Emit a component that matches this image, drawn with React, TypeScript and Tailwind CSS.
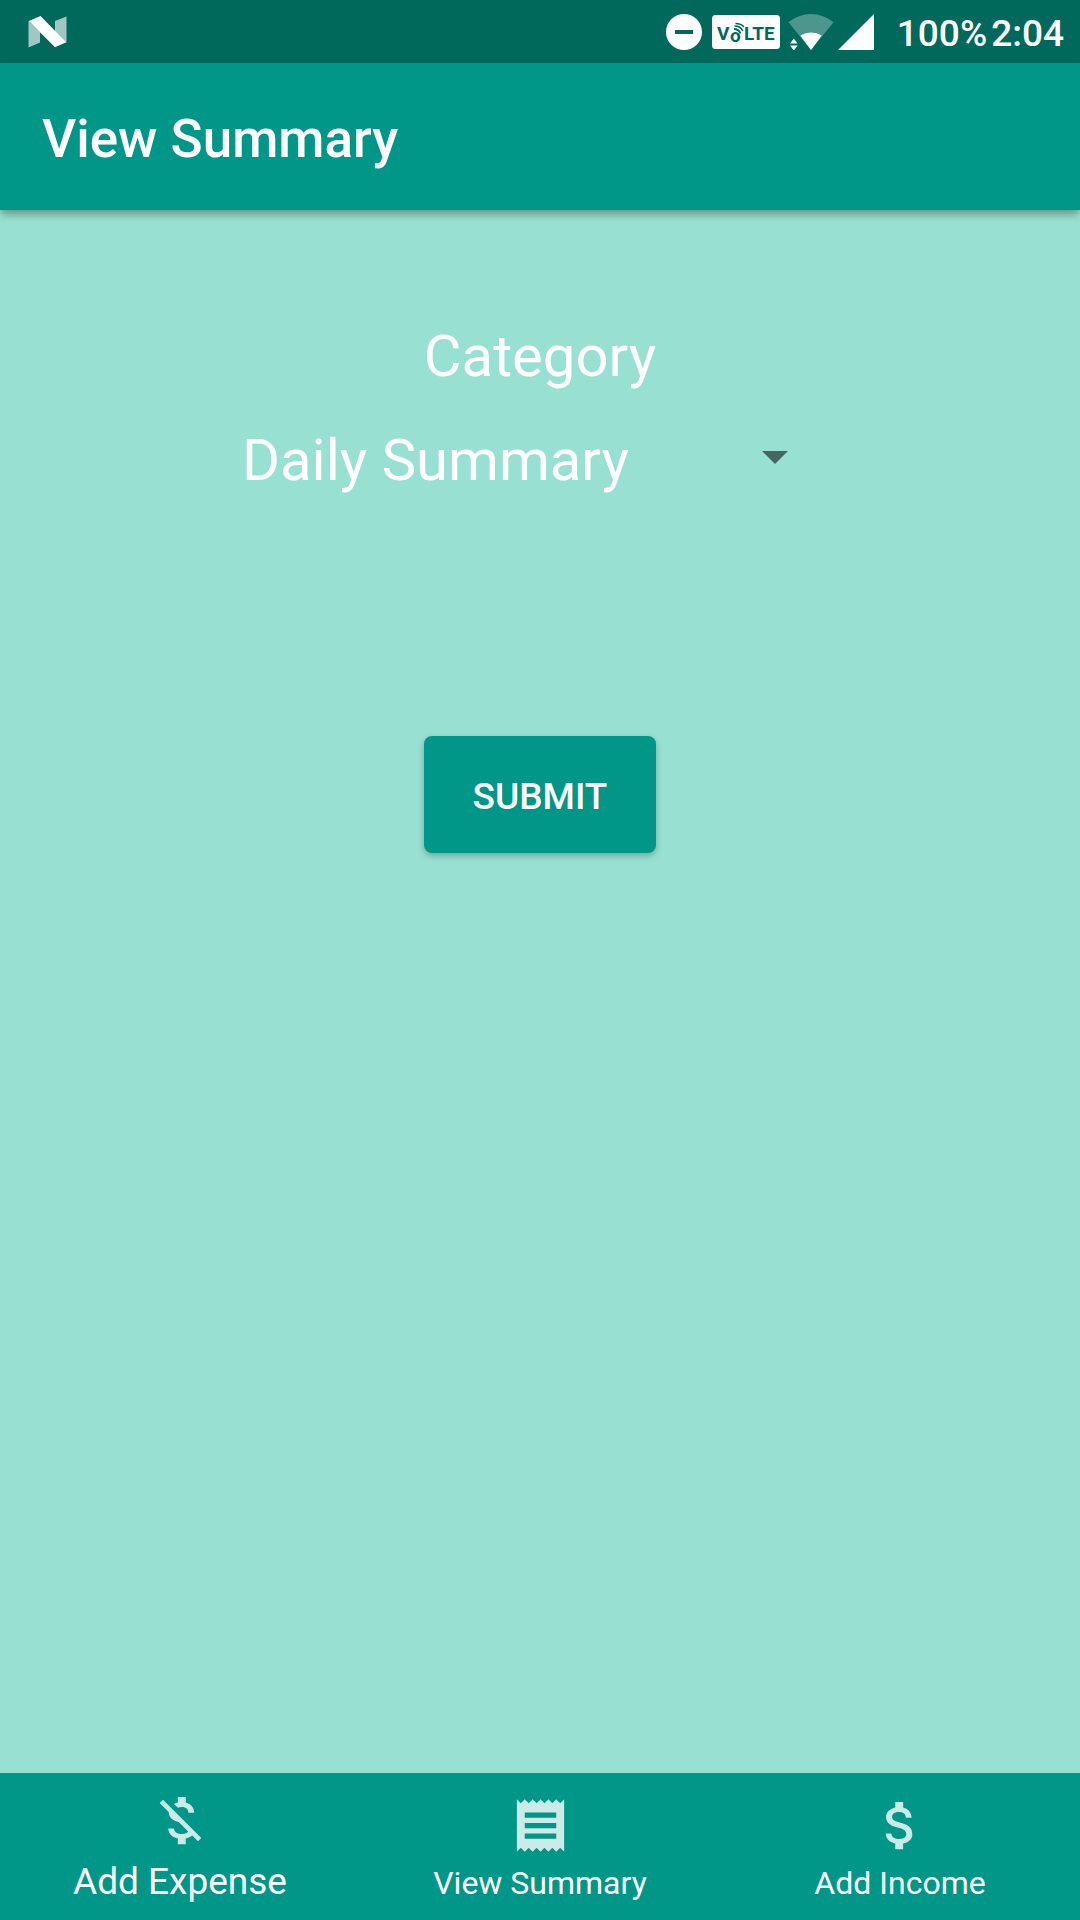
import React from "react";
import { MdAttachMoney, MdMoneyOff, MdReceipt } from "react-icons/md";

function NougatIcon() {
  return (
    <svg className="h-8 w-10" viewBox="0 0 40 32" aria-hidden="true">
      <path d="M0.500 5L12 16V26.500L0.500 31.500Z" fill="#fff" fillOpacity="0.63" />
      <path d="M27 5L38.500 0.500V27L27 15.500Z" fill="#fff" fillOpacity="0.63" />
      <path d="M0.800 5L12.500 0L38.200 26.200L27 31.300Z" fill="#fff" />
    </svg>
  );
}

function DoNotDisturbIcon() {
  return (
    <svg className="size-9" viewBox="0 0 36 36" aria-hidden="true">
      <circle cx="18" cy="18" r="18" fill="#fff" />
      <rect x="9" y="16" width="18" height="4" fill="#00695c" />
    </svg>
  );
}

function VolteBadge() {
  return (
    <svg className="h-[34px] w-[68px]" viewBox="0 0 68 34" aria-label="VoLTE">
      <rect width="68" height="34" rx="3.500" fill="#fff" />
      <g fill="#00695c" className="text-[19px] font-bold">
        <text x="5" y="25">V</text>
        <text x="18" y="27">o</text>
        <text x="32" y="25">LTE</text>
      </g>
      <g fill="none" stroke="#00695c">
        <path d="M22 14Q26.500 14 28.500 18.500" strokeWidth="1.800" />
        <path d="M22.500 11Q28.500 11 30.800 16" strokeWidth="1.600" />
        <path d="M23.500 8.500Q29 8.500 32 12" strokeWidth="1.300" />
      </g>
    </svg>
  );
}

function WifiIcon() {
  return (
    <svg className="h-9 w-[46px]" viewBox="0 0 46 36" aria-hidden="true">
      <path d="M0.500 8.300A35 35 0 0 1 45.500 8.300L23 36Z" fill="#fff" fillOpacity="0.3" />
      <path d="M12.300 21.500A20 20 0 0 1 33.700 21.500L23 36Z" fill="#fff" />
      <path d="M2 29.500L5.800 24.500L9.600 29.500ZM2 31.500H9.600L5.800 36.500Z" fill="#fff" />
    </svg>
  );
}

function SignalIcon() {
  return (
    <svg className="size-9" viewBox="0 0 36 36" aria-hidden="true">
      <path d="M36 0V36H0Z" fill="#fff" />
    </svg>
  );
}

function StatusBar() {
  return (
    <div className="flex h-[63px] items-center bg-[#00695c] pr-4 pl-7 text-white">
      <NougatIcon />
      <div className="ml-auto flex items-center">
        <DoNotDisturbIcon />
        <div className="ml-2.5">
          <VolteBadge />
        </div>
        <div className="ml-2">
          <WifiIcon />
        </div>
        <div className="ml-1">
          <SignalIcon />
        </div>
        <span className="ml-[23px] pt-1 text-[37px] leading-10 font-medium">100%</span>
        <span className="ml-1 pt-1 text-[37px] leading-10 font-medium">2:04</span>
      </div>
    </div>
  );
}

const categories = ["Daily Summary", "Weekly Summary", "Monthly Summary"];

export default function App() {
  return (
    <div className="flex min-h-screen flex-col bg-[#98e1d2] font-['Roboto',sans-serif]">
      <StatusBar />
      <header className="z-10 flex h-[147px] items-center bg-[#009688] px-[42px] pt-1 shadow-[0_5px_8px_-1px_rgba(0,0,0,0.35)]">
        <h1 className="text-[53px] leading-16 font-medium text-white">View Summary</h1>
      </header>

      <main className="flex flex-1 flex-col items-center pt-[110px]">
        <label htmlFor="category" className="text-[58px] leading-[72px] text-white">
          Category
        </label>
        <div className="mt-8 grid w-full max-w-[596px] items-center">
          <select
            id="category"
            className="col-start-1 row-start-1 h-[72px] w-full appearance-none bg-transparent text-[58px] leading-[72px] text-white outline-none"
          >
            {categories.map((name) => (
              <option key={name} className="text-black">
                {name}
              </option>
            ))}
          </select>
          <svg
            className="pointer-events-none col-start-1 row-start-1 mr-[50px] mb-1.5 h-[13px] w-[26px] justify-self-end"
            viewBox="0 0 26 13"
            aria-hidden="true"
          >
            <path d="M0 0H26L13 13Z" fill="#000" fillOpacity="0.54" />
          </svg>
        </div>
        <button
          type="button"
          className="mt-60 h-[117px] w-[232px] rounded-lg bg-[#009688] pt-1 text-[37px] leading-11 font-medium text-white shadow-[0_3px_6px_rgba(0,0,0,0.25)]"
        >
          SUBMIT
        </button>
      </main>

      <nav className="grid h-[147px] grid-cols-3 bg-[#009688] text-white">
        <button type="button" className="flex flex-col items-center pt-4">
          <MdMoneyOff className="size-[63px] opacity-80" aria-hidden="true" />
          <span className="mt-2 text-[37px] leading-11">Add Expense</span>
        </button>
        <button type="button" className="flex flex-col items-center pt-[21px]">
          <MdReceipt className="size-[63px] opacity-80" aria-hidden="true" />
          <span className="mt-1 text-[32px] leading-11">View Summary</span>
        </button>
        <button type="button" className="flex flex-col items-center pt-[21px]">
          <MdAttachMoney className="size-[63px] opacity-80" aria-hidden="true" />
          <span className="mt-1 text-[32px] leading-11">Add Income</span>
        </button>
      </nav>
    </div>
  );
}
